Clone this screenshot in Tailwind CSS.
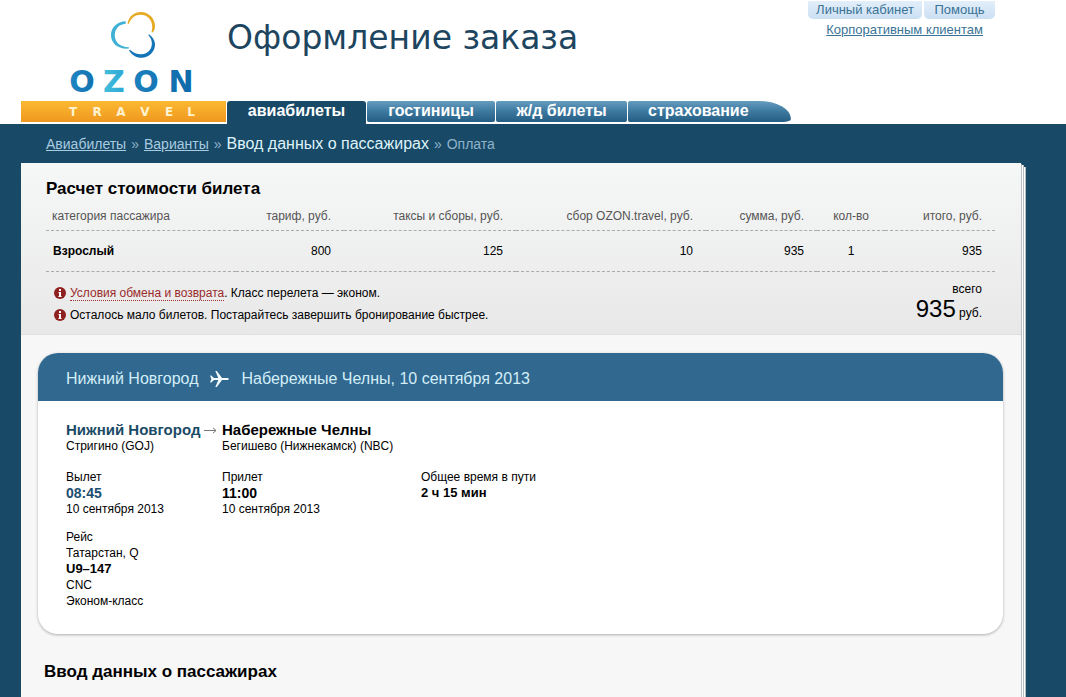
<!DOCTYPE html>
<html lang="ru">
<head>
<meta charset="utf-8">
<meta name="viewport" content="width=device-width, initial-scale=1">
<title>OZON Travel — Оформление заказа</title>
<script src="https://cdn.jsdelivr.net/npm/@tailwindcss/browser@4"></script>
</head>
<body class="flex min-h-screen flex-col bg-[#184966] font-['Liberation_Sans',Arial,sans-serif] text-[12px] leading-4 text-black">

<header class="flex h-[124px] bg-white pl-[21px]">
  <a href="#" aria-label="OZON Travel" class="mr-px block w-[205px] shrink-0">
    <svg width="205" height="124" viewBox="21 0 205 124" class="block">
      <defs>
        <linearGradient id="bar" x1="0" y1="0" x2="0" y2="1"><stop offset="0" stop-color="#fcb932"/><stop offset="1" stop-color="#ee981f"/></linearGradient>
        <linearGradient id="word" gradientUnits="userSpaceOnUse" x1="69" y1="0" x2="195" y2="0"><stop offset="0" stop-color="#1f86c4"/><stop offset=".22" stop-color="#1270ae"/><stop offset=".25" stop-color="#45c0dc"/><stop offset=".48" stop-color="#2aa3d4"/><stop offset=".51" stop-color="#1a80be"/><stop offset="1" stop-color="#0e68a8"/></linearGradient>
      </defs>
      <path d="M127.500 23.500C129 15.500 135 11.500 142 12C150 13 155.500 19.500 155 27C154.800 29 154 31 152.500 32.500L151.500 32.200C153.500 25 151.500 18 144.500 15.300C138 13.200 131.500 16 128.700 24Z" fill="#e5ab25"/>
      <path d="M125.800 21.200C117 21.500 111 27.500 111 35C111 43 117.500 49.500 129 48.600L128.800 47.300C120.500 47 114.800 42.500 114.800 35.500C114.800 29 118.500 24.500 125.600 23.700Z" fill="#3eb1d4"/>
      <path d="M129 50.300C132 55.500 137 58.300 142.500 57.800C150 57 155 51 155 44.500C155 40.500 152.500 36.500 148.800 34.200L148.400 35.300C152 39 153 44.500 150.500 49C147 55.500 137 56.500 130 49.800Z" fill="#1574b5"/>
      <text y="92" x="82 114 146 181" text-anchor="middle" font-family="DejaVu Sans" font-weight="bold" font-size="30" fill="url(#word)">OZON</text>
      <rect x="21" y="101" width="205" height="21" fill="url(#bar)"/>
      <text y="116" x="73 97 121 145 169 191" text-anchor="middle" font-family="DejaVu Sans" font-weight="bold" font-size="12" fill="#fff3d0">TRAVEL</text>
    </svg>
  </a>
  <div class="flex min-w-0 flex-1 flex-col justify-between">
    <div class="flex justify-between">
      <h1 class="mt-4 font-['DejaVu_Sans',Verdana,sans-serif] text-[33px] leading-[44px] whitespace-nowrap text-[#1d4560]">Оформление заказа</h1>
      <div class="mt-px mr-[71px] text-[13px] text-[#3a7396]">
        <div class="flex gap-0.5 text-center">
          <a href="#" class="h-[18px] w-[114px] rounded-b-[5px] bg-linear-to-b from-[#e3effa] to-[#cbdff3] leading-[18px]">Личный кабинет</a>
          <a href="#" class="h-[18px] w-[71px] rounded-b-[5px] bg-linear-to-b from-[#e3effa] to-[#cbdff3] leading-[18px]">Помощь</a>
        </div>
        <a href="#" class="mt-[3px] mr-3 block text-right underline">Корпоративным клиентам</a>
      </div>
    </div>
    <nav class="flex h-[23px] gap-px text-center text-[16px] leading-5 font-bold text-white">
      <a href="#" aria-current="page" class="w-[139px] rounded-t-[3px] bg-[#184966]">авиабилеты</a>
      <a href="#" class="h-[21px] w-[128px] rounded-[2px] bg-linear-to-b from-[#659dbf] via-[#3d789f] to-[#245e83]">гостиницы</a>
      <a href="#" class="h-[21px] w-[131px] rounded-[2px] bg-linear-to-b from-[#659dbf] via-[#3d789f] to-[#245e83]">ж/д билеты</a>
      <a href="#" class="h-[21px] w-[163px] bg-linear-to-b from-[#659dbf] via-[#3d789f] to-[#245e83] pl-5 text-left [border-radius:2px_32px_8px_2px/2px_18px_3px_2px]">страхование</a>
    </nav>
  </div>
</header>

<nav aria-label="Шаги заказа" class="flex h-[39px] items-center gap-[5px] pl-[46px] text-[14px] text-[#8fb3ca]">
  <a href="#" class="text-[#a9cbe0] underline">Авиабилеты</a><span>»</span>
  <a href="#" class="text-[#a9cbe0] underline">Варианты</a><span>»</span>
  <span class="text-[16px] text-[#dff3fb]">Ввод данных о пассажирах</span><span>»</span>
  <span>Оплата</span>
</nav>

<div class="mr-10 ml-[21px] flex flex-1">
  <main class="min-w-0 flex-1 rounded-tr-[3px] border-r border-[#b9bec2] bg-[#f7f7f7]">
    <section class="h-[172px] border-b border-[#dfdfdf] bg-linear-to-b from-[#f6f7f7] to-[#e8e8e8] pt-4 pr-[26px] pl-[25px]">
      <h2 class="text-[17px] leading-5 font-bold">Расчет стоимости билета</h2>
      <table class="mt-1 w-full table-fixed border-collapse">
        <colgroup><col><col class="w-[108px]"><col class="w-[172px]"><col class="w-[190px]"><col class="w-[111px]"><col class="w-[68px]"><col class="w-[110px]"></colgroup>
        <thead>
          <tr class="h-[27px] border-b border-dashed border-[#ababab] text-right whitespace-nowrap text-[#555]">
            <th scope="col" class="pl-1.5 text-left font-normal">категория пассажира</th>
            <th scope="col" class="pr-[13px] font-normal">тариф, руб.</th>
            <th scope="col" class="pr-[13px] font-normal">таксы и сборы, руб.</th>
            <th scope="col" class="pr-[13px] font-normal">сбор OZON.travel, руб.</th>
            <th scope="col" class="pr-[13px] font-normal">сумма, руб.</th>
            <th scope="col" class="text-center font-normal">кол-во</th>
            <th scope="col" class="pr-[13px] font-normal">итого, руб.</th>
          </tr>
        </thead>
        <tbody>
          <tr class="h-[41px] border-b border-dashed border-[#ababab] text-right">
            <th scope="row" class="pl-[7px] text-left font-bold">Взрослый</th>
            <td class="pr-[13px]">800</td>
            <td class="pr-[13px]">125</td>
            <td class="pr-[13px]">10</td>
            <td class="pr-[13px]">935</td>
            <td class="text-center">1</td>
            <td class="pr-[13px]">935</td>
          </tr>
        </tbody>
      </table>
      <div class="flex justify-between pt-[9px] pr-[13px] pl-2">
        <ul class="space-y-1.5 pt-1">
          <li class="flex items-center gap-1">
            <svg class="size-3 shrink-0" viewBox="0 0 12 12" aria-hidden="true"><circle cx="6" cy="6" r="6" fill="#8f2020"/><path d="M5 2h2v2H5zM4.500 5H7v4h.6v1H4.400V9H5V6h-.5z" fill="#fff"/></svg>
            <span><a href="#" class="border-b border-dotted border-[#a03030] text-[#9a2a2a]">Условия обмена и возврата</a>. Класс перелета — эконом.</span>
          </li>
          <li class="flex items-center gap-1">
            <svg class="size-3 shrink-0" viewBox="0 0 12 12" aria-hidden="true"><circle cx="6" cy="6" r="6" fill="#8f2020"/><path d="M5 2h2v2H5zM4.500 5H7v4h.6v1H4.400V9H5V6h-.5z" fill="#fff"/></svg>
            <span>Осталось мало билетов. Постарайтесь завершить бронирование быстрее.</span>
          </li>
        </ul>
        <p class="text-right">всего<br><span class="text-[24px] leading-6">935</span> руб.</p>
      </div>
    </section>

    <article class="mr-[18px] ml-[17px] mt-[18px] overflow-hidden rounded-[20px] bg-white shadow-[0_1px_3px_rgba(0,0,0,0.3)]">
      <h3 class="flex h-12 items-center gap-3 bg-[#30688f] pt-1 pl-7 text-[16px] leading-5 text-[#d3eef8]">
        Нижний Новгород
        <svg width="19" height="16" viewBox="0 0 19 16" aria-hidden="true"><path d="M0 4.500h1.200L4 7h4.300L5.300 0h1.500l5.200 7h4.500c1.500 0 2.500.5 2.500 1s-1 1-2.500 1H12l-5.200 7H5.300l3-7H4l-2.800 2.500H0L1.400 8z" fill="#f2fbff"/></svg>
        Набережные Челны, 10 сентября 2013
      </h3>
      <div class="grid grid-cols-[156px_199px_1fr] px-7 pt-[21px] pb-[25px] whitespace-nowrap">
        <div>
          <p class="flex items-center gap-1 text-[15px] font-bold text-[#1b4a66]">Нижний Новгород
            <svg width="13" height="7" viewBox="0 0 13 7" aria-hidden="true"><path d="M0 3.500h12M9 .8l3 2.700-3 2.700" fill="none" stroke="#777"/></svg>
          </p>
          <p>Стригино (GOJ)</p>
        </div>
        <div class="col-span-2">
          <p class="text-[15px] font-bold">Набережные Челны</p>
          <p>Бегишево (Нижнекамск) (NBC)</p>
        </div>
        <div class="mt-[15px]">
          <p>Вылет</p>
          <p class="text-[14px] font-bold text-[#1b4f70]">08:45</p>
          <p>10 сентября 2013</p>
        </div>
        <div class="mt-[15px]">
          <p>Прилет</p>
          <p class="text-[14px] font-bold">11:00</p>
          <p>10 сентября 2013</p>
        </div>
        <div class="mt-[15px]">
          <p>Общее время в пути</p>
          <p class="text-[13px] font-bold">2 ч 15 мин</p>
        </div>
        <div class="mt-3">
          <p>Рейс</p>
          <p>Татарстан, Q</p>
          <p class="text-[13px] font-bold">U9–147</p>
          <p>CNC</p>
          <p>Эконом-класс</p>
        </div>
      </div>
    </article>

    <h2 class="mt-7 pl-[23px] text-[17px] leading-5 font-bold">Ввод данных о пассажирах</h2>
  </main>
  <div class="mt-0.5 w-0.5 border-r border-[#b9bec2] bg-white"></div>
  <div class="mt-1 w-0.5 border-r border-[#b9bec2] bg-white"></div>
</div>

</body>
</html>
